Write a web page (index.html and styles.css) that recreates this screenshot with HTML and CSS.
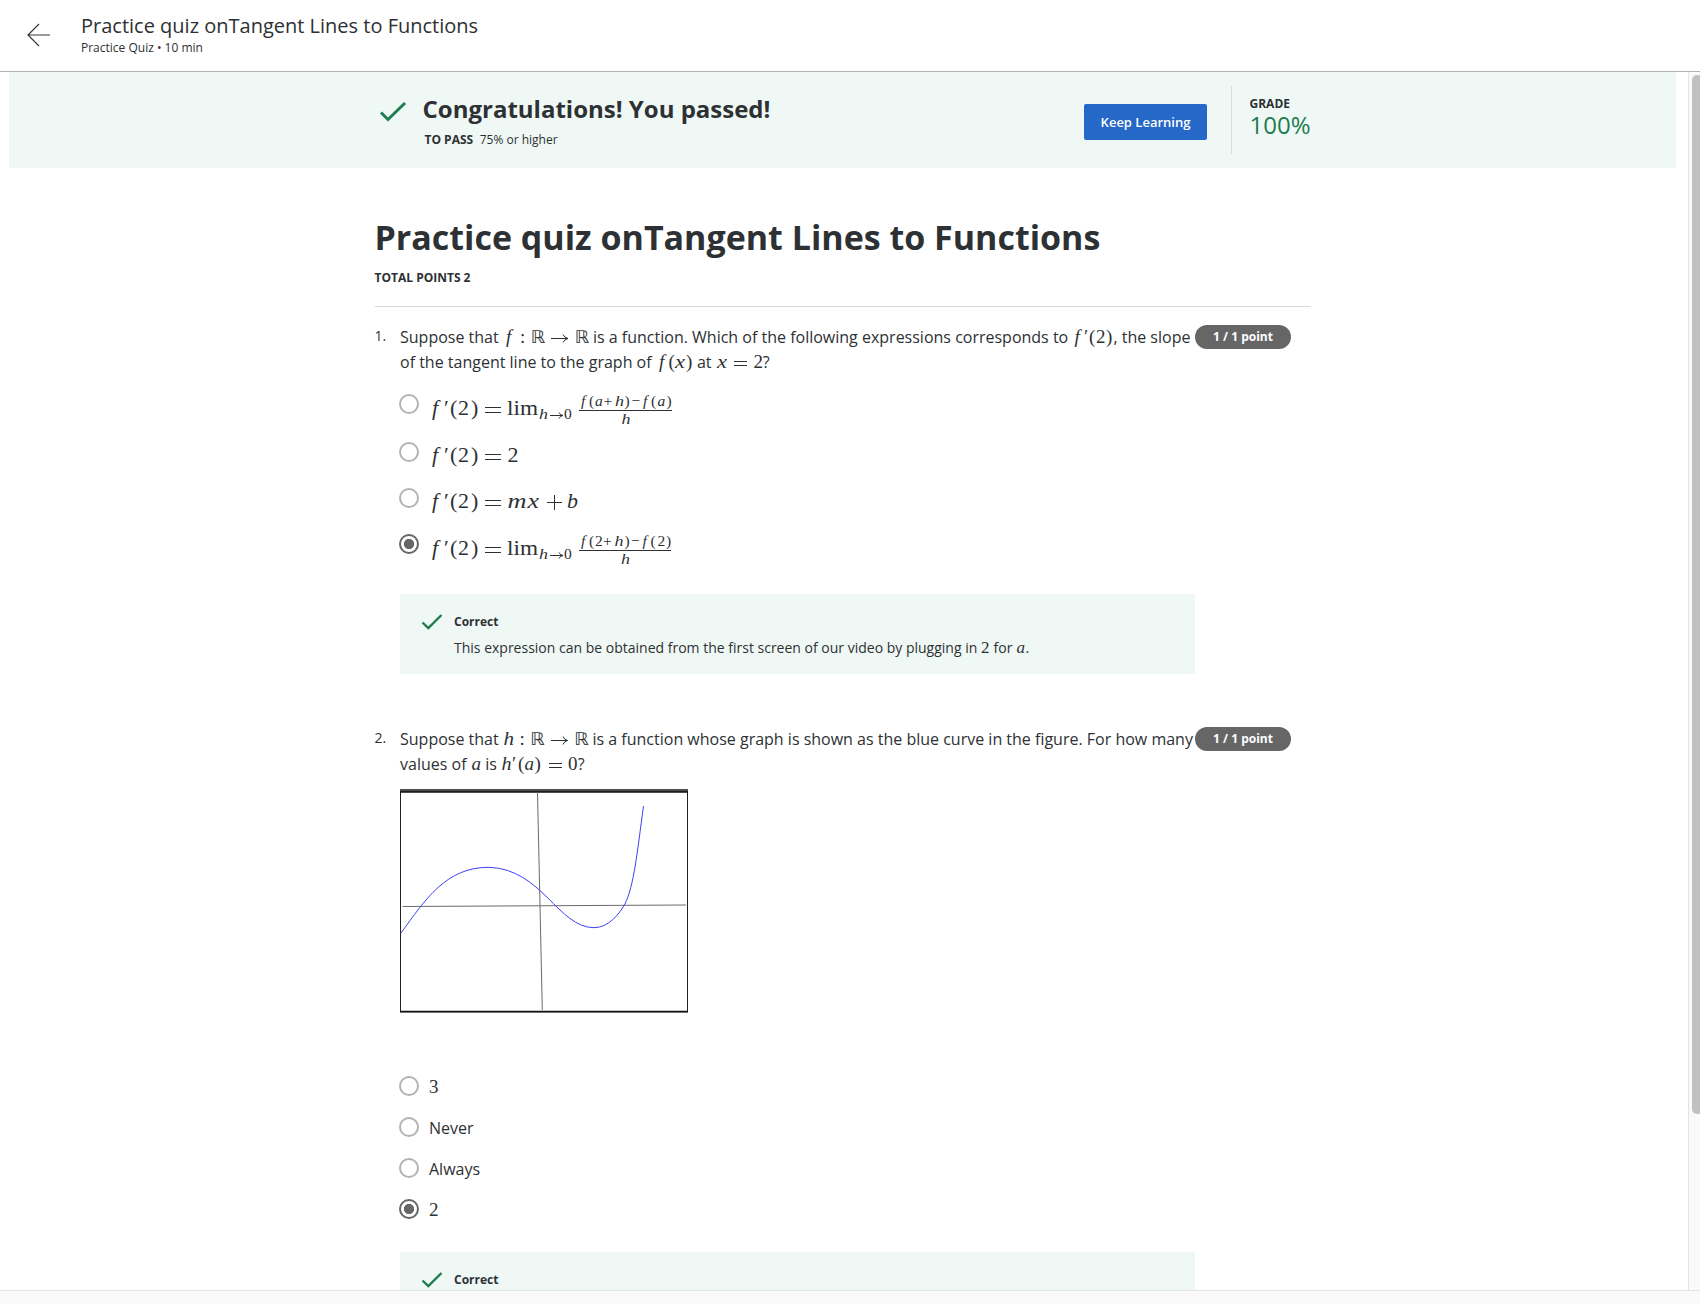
FILE: index.html
```html
<!DOCTYPE html>
<html lang="en">
<head>
<meta charset="utf-8">
<title>Practice quiz onTangent Lines to Functions</title>
<link rel="stylesheet" href="styles.css">
</head>
<body>
<header class="topbar">
  <svg class="back" width="24" height="24" viewBox="0 0 24 24"><path d="M23 12H1M12 1L1 12l11 11"/></svg>
  <div class="topbar-text">
    <div class="topbar-title">Practice quiz onTangent Lines to Functions</div>
    <div class="topbar-sub">Practice Quiz • 10 min</div>
  </div>
</header>
<div class="viewport">
  <main class="page">
    <section class="banner">
      <svg class="check check-lg" width="28" height="22" viewBox="0 0 28 22"><path d="M2 11.5L9 18.5L26 2"/></svg>
      <div class="banner-text">
        <h2>Congratulations! You passed!</h2>
        <p><b>TO PASS</b><span>75% or higher</span></p>
      </div>
      <button class="keep">Keep Learning</button>
      <div class="grade"><b>GRADE</b><span>100%</span></div>
    </section>
    <div class="quiz">
      <h1>Practice quiz onTangent Lines to Functions</h1>
      <div class="points">TOTAL POINTS 2</div>
      <section class="question q1">
        <div class="num">1.</div>
        <div class="body">
          <div class="prompt">Suppose that <svg class="math" width="86" height="20"><g class="n"><text class="i" x="3" y="15">f</text><text x="17" y="15">:</text><text class="bb" x="27.500" y="15" textLength="14.500" lengthAdjust="spacingAndGlyphs">ℝ</text><text class="bb" x="71.500" y="15" textLength="14.500" lengthAdjust="spacingAndGlyphs">ℝ</text></g><path d="M48 10.500H65M60 6.500Q61 9.500 65 10.500Q61 11.500 60 14.500"/></svg> is a function. Which of the following expressions corresponds to <svg class="math" width="41" height="20"><g class="n"><text class="i" x="2.500" y="15">f</text><text x="12" y="15">′</text><text x="17 24 34" y="15">(2)</text></g></svg>, the slope<br>of the tangent line to the graph of <svg class="math" width="37" height="20"><g class="n"><text class="i" x="3" y="15">f</text><text x="12.500" y="15">(</text><text class="i" x="19" y="15" textLength="10" lengthAdjust="spacingAndGlyphs">x</text><text x="30" y="15">)</text></g></svg> at <svg class="math" width="47" height="20"><g class="n"><text class="i" x="1" y="15" textLength="10" lengthAdjust="spacingAndGlyphs">x</text><text x="37.500" y="15">2</text></g><path d="M18 8.500H31M18 12.500H31"/></svg>?</div>
          <div class="options">
            <div class="option h48"><i class="radio"></i><svg class="formula" width="246" height="36"><g class="b"><text class="i" x="3" y="21">f</text><text x="15" y="21">′</text><text x="21 29 42" y="21">(2)</text><text x="78" y="21" textLength="31" lengthAdjust="spacingAndGlyphs">lim</text></g><g class="s"><text class="i" x="110" y="25" textLength="9" lengthAdjust="spacingAndGlyphs">h</text><text x="135" y="25">0</text><text class="i" x="152" y="12">f</text><text x="160" y="12">(</text><text class="i" x="166" y="12">a</text><text x="174.500" y="12">+</text><text class="i" x="186" y="12" textLength="9" lengthAdjust="spacingAndGlyphs">h</text><text x="195.500" y="12">)</text><text x="202.500" y="12">−</text><text class="i" x="214" y="12">f</text><text x="222" y="12">(</text><text class="i" x="228.500" y="12">a</text><text x="237.500" y="12">)</text><text class="i" x="192.500" y="30" textLength="9" lengthAdjust="spacingAndGlyphs">h</text></g><path d="M56 13.500H72M56 18.500H72M150 16.500H243M121 21.500H134M130 18.500Q131 21 134 21.500Q131 22 130 24.500"/></svg></div>
            <div class="option h46"><i class="radio"></i><svg class="formula" width="246" height="36"><g class="b"><text class="i" x="3" y="20">f</text><text x="15" y="20">′</text><text x="21 29 42" y="20">(2)</text><text x="78.500" y="20">2</text></g><path d="M56 12.500H72M56 17.500H72"/></svg></div>
            <div class="option h46"><i class="radio"></i><svg class="formula" width="246" height="36"><g class="b"><text class="i" x="3" y="20">f</text><text x="15" y="20">′</text><text x="21 29 42" y="20">(2)</text><text class="i" x="78.500" y="20" textLength="19" lengthAdjust="spacingAndGlyphs">m</text><text class="i" x="98.500" y="20" textLength="11.500" lengthAdjust="spacingAndGlyphs">x</text><text class="i" x="138" y="20">b</text></g><path d="M56 12.500H72M56 17.500H72M118 14.500H133M125.500 7V22"/></svg></div>
            <div class="option h46"><i class="radio on"></i><svg class="formula" width="246" height="36"><g class="b"><text class="i" x="3" y="21">f</text><text x="15" y="21">′</text><text x="21 29 42" y="21">(2)</text><text x="78" y="21" textLength="31" lengthAdjust="spacingAndGlyphs">lim</text></g><g class="s"><text class="i" x="110" y="25" textLength="9" lengthAdjust="spacingAndGlyphs">h</text><text x="135" y="25">0</text><text class="i" x="152" y="12">f</text><text x="160 166 174" y="12">(2+</text><text class="i" x="185.500" y="12" textLength="9" lengthAdjust="spacingAndGlyphs">h</text><text x="195.500" y="12">)</text><text x="202" y="12">−</text><text class="i" x="213.500" y="12">f</text><text x="221.500 228.500 237" y="12">(2)</text><text class="i" x="192" y="30" textLength="9" lengthAdjust="spacingAndGlyphs">h</text></g><path d="M56 13.500H72M56 18.500H72M150 16.500H242M121 21.500H134M130 18.500Q131 21 134 21.500Q131 22 130 24.500"/></svg></div>
          </div>
          <div class="feedback">
            <svg class="check" width="22" height="18" viewBox="0 0 22 18"><path d="M1.500 9.500L7.300 15L20.500 2"/></svg>
            <div><b>Correct</b><p>This expression can be obtained from the first screen of our video by plugging in <svg class="math small" width="9" height="18"><g class="t"><text x="0" y="14">2</text></g></svg> for <svg class="math small" width="9.500" height="18"><g class="t"><text class="i" x="0.500" y="14">a</text></g></svg>.</p></div>
          </div>
        </div>
        <div class="badge">1 / 1 point</div>
      </section>
      <section class="question q2">
        <div class="num">2.</div>
        <div class="body">
          <div class="prompt">Suppose that <svg class="math" width="85.500" height="20"><g class="n"><text class="i" x="0.500" y="15" textLength="10.500" lengthAdjust="spacingAndGlyphs">h</text><text x="16.500" y="15">:</text><text class="bb" x="27" y="15" textLength="14.500" lengthAdjust="spacingAndGlyphs">ℝ</text><text class="bb" x="71" y="15" textLength="14.500" lengthAdjust="spacingAndGlyphs">ℝ</text></g><path d="M48 10.500H64.500M60 6.500Q61 9.500 64.500 10.500Q61 11.500 60 14.500"/></svg> is a function whose graph is shown as the blue curve in the figure. For how many<br>values of <svg class="math" width="10.500" height="20"><g class="n"><text class="i" x="0.500" y="15">a</text></g></svg> is <svg class="math" width="76.500" height="20"><g class="n"><text class="i" x="0.500" y="15" textLength="10" lengthAdjust="spacingAndGlyphs">h</text><text x="11" y="15">′</text><text x="17" y="15">(</text><text class="i" x="23.500" y="15">a</text><text x="33.500" y="15">)</text><text x="67" y="15">0</text></g><path d="M48 8.500H61M48 12.500H61"/></svg>?</div>
          <svg class="figure" width="288" height="224" viewBox="0 0 288 224">
            <rect class="frame" x=".5" y="1" width="287" height="222"/>
            <path class="top" d="M0 1.500H288"/><path class="edge" d="M0 3H288M0 222.500H288"/>
            <path class="axis" d="M2.500 117.500L286 116M137.500 3L142.300 221"/>
            <path class="curve" d="M1 144C25 111 46 78 89 78.300C142 80 158 138.500 194 138.700C209 138.500 219 125 225 115C234 96 237 65 243.500 17"/>
          </svg>
          <div class="options">
            <div class="option h41"><i class="radio"></i><svg class="formula" width="40" height="24"><g class="n"><text x="0" y="17">3</text></g></svg></div>
            <div class="option h41"><i class="radio"></i><span>Never</span></div>
            <div class="option h41"><i class="radio"></i><span>Always</span></div>
            <div class="option h41"><i class="radio on"></i><svg class="formula" width="40" height="24"><g class="n"><text x="0" y="17">2</text></g></svg></div>
          </div>
          <div class="feedback">
            <svg class="check" width="22" height="18" viewBox="0 0 22 18"><path d="M1.500 9.500L7.300 15L20.500 2"/></svg>
            <div><b>Correct</b></div>
          </div>
        </div>
        <div class="badge">1 / 1 point</div>
      </section>
    </div>
  </main>
  <div class="scrollbar"><div class="thumb"></div></div>
</div>
<div class="bottom"></div>
</body>
</html>
```
FILE: styles.css
```css
* { box-sizing: border-box; }
body { margin: 0; width: 1700px; height: 1304px; overflow: hidden; background: #fff; color: #2d3134; font-family: "Open Sans", sans-serif; }
h1, h2, p { margin: 0; }
.topbar { height: 72px; border-bottom: 1px solid #b0b5b3; display: flex; padding-left: 27px; }
.back { margin-top: 23px; fill: none; stroke: #373a3c; stroke-width: 1.2; }
.topbar-text { margin-left: 30px; padding-top: 12px; white-space: nowrap; }
.topbar-title { font-size: 20px; line-height: 28px; }
.topbar-sub { font-size: 12px; line-height: 16px; }
.viewport { display: flex; height: 1218px; overflow: hidden; }
.page { width: 1688px; height: 1218px; overflow: hidden; padding: 0 12px 0 9px; }
.scrollbar { width: 12px; border-left: 1px solid #e4e4e4; background: #fafafa; padding: 3px 0 0 3px; }
.thumb { width: 11px; height: 1039px; border-radius: 5px; background: #c1c1c1; }
.bottom { height: 14px; border-top: 1px solid #e4e4e4; background: #f9f9f9; }
.banner { height: 96px; background: #f0f8f5; display: flex; padding-left: 370px; white-space: nowrap; }
.check { fill: none; stroke: #1d7c50; stroke-width: 2.4; flex: none; }
.check-lg { margin-top: 29px; stroke-width: 3; }
.banner-text { margin-left: 15.5px; width: 661.5px; padding-top: 20px; }
.banner h2 { font-size: 24px; line-height: 34px; }
.banner p { font-size: 12px; line-height: 18px; margin: 5px 0 0 2px; }
.banner p span { margin-left: 6.500px; }
.keep { width: 123px; height: 36px; margin-top: 32px; padding: 0; border: 0; border-radius: 2px; background: #2668c8; color: #fff; font: 600 13px "Open Sans", sans-serif; }
.grade { margin: 14px 0 0 24px; height: 68px; border-left: 1px solid #d8dddb; padding: 9px 0 0 17.5px; display: flex; flex-direction: column; }
.grade b { font-size: 12px; line-height: 18px; }
.grade span { font-size: 24px; line-height: 24px; color: #1d7c50; }
.quiz { width: 936px; margin-left: 366px; padding-top: 45px; }
h1 { font-size: 34px; line-height: 48px; white-space: nowrap; margin-left: -.5px; }
.points { font-size: 12px; font-weight: 700; line-height: 18px; margin: 8px 0 0 -.5px; height: 38px; border-bottom: 1px solid #d9d9d9; }
.question { display: grid; grid-template-columns: 25px 795px 96px; }
.q1 { margin-top: 18px; height: 402px; }
.num { font-size: 14px; line-height: 20px; padding-top: 1px; margin-left: -.5px; }
.prompt { font-size: 16px; line-height: 25px; height: 69px; white-space: nowrap; }
.math { overflow: visible; vertical-align: 0; margin: -5px 0; }
.math.small { vertical-align: 1px; }
.math text, .formula text { font-family: "Liberation Serif", serif; fill: #2d3134; }
.math .n text, .formula .n text { font-size: 19px; }
.math .n .bb { font-family: "DejaVu Sans", sans-serif; font-size: 17.500px; }
.math .t text { font-size: 17px; }
.formula .b text { font-size: 22px; }
.formula .s text { font-size: 15.500px; }
.math .i, .formula .i { font-style: italic; }
.math path, .formula path { fill: none; stroke: #2d3134; stroke-width: 1; }
.formula { overflow: visible; flex: none; }
.option { display: flex; gap: 10px; margin-left: -1px; font-size: 16px; }
.option span { line-height: 22px; }
.h48 { height: 48px; }
.h46 { height: 46px; }
.h41 { height: 41px; }
.radio { width: 20px; height: 20px; border: 2px solid #b3b3b3; border-radius: 50%; flex: none; }
.radio.on { border-color: #666; background: radial-gradient(circle, #666 4.8px, transparent 5.400px); }
.feedback { width: 795px; height: 80px; background: #f0f8f5; margin-top: 14px; display: flex; padding: 19px 21px 0; white-space: nowrap; }
.feedback > div { margin-left: 11px; }
.feedback b { display: block; font-size: 12px; line-height: 18px; }
.feedback p { font-size: 14px; line-height: 20px; margin-top: 7px; }
.badge { width: 96px; height: 24px; border-radius: 12px; background: #666; color: #fff; font-size: 12px; font-weight: 700; line-height: 24px; text-align: center; }
.q2 .prompt { height: 62px; }
.figure { display: block; margin-bottom: 63px; }
.frame { fill: #fff; stroke: #222; stroke-width: 1; }
.top { stroke: #4b4e50; stroke-width: 3; }
.edge { stroke: #111; stroke-width: 1.400; }
.axis { stroke: #6b6b6b; stroke-width: 1; }
.curve { fill: none; stroke: #3f3ff5; stroke-width: 1; }
.q2 .feedback { margin-top: 12px; }
```
